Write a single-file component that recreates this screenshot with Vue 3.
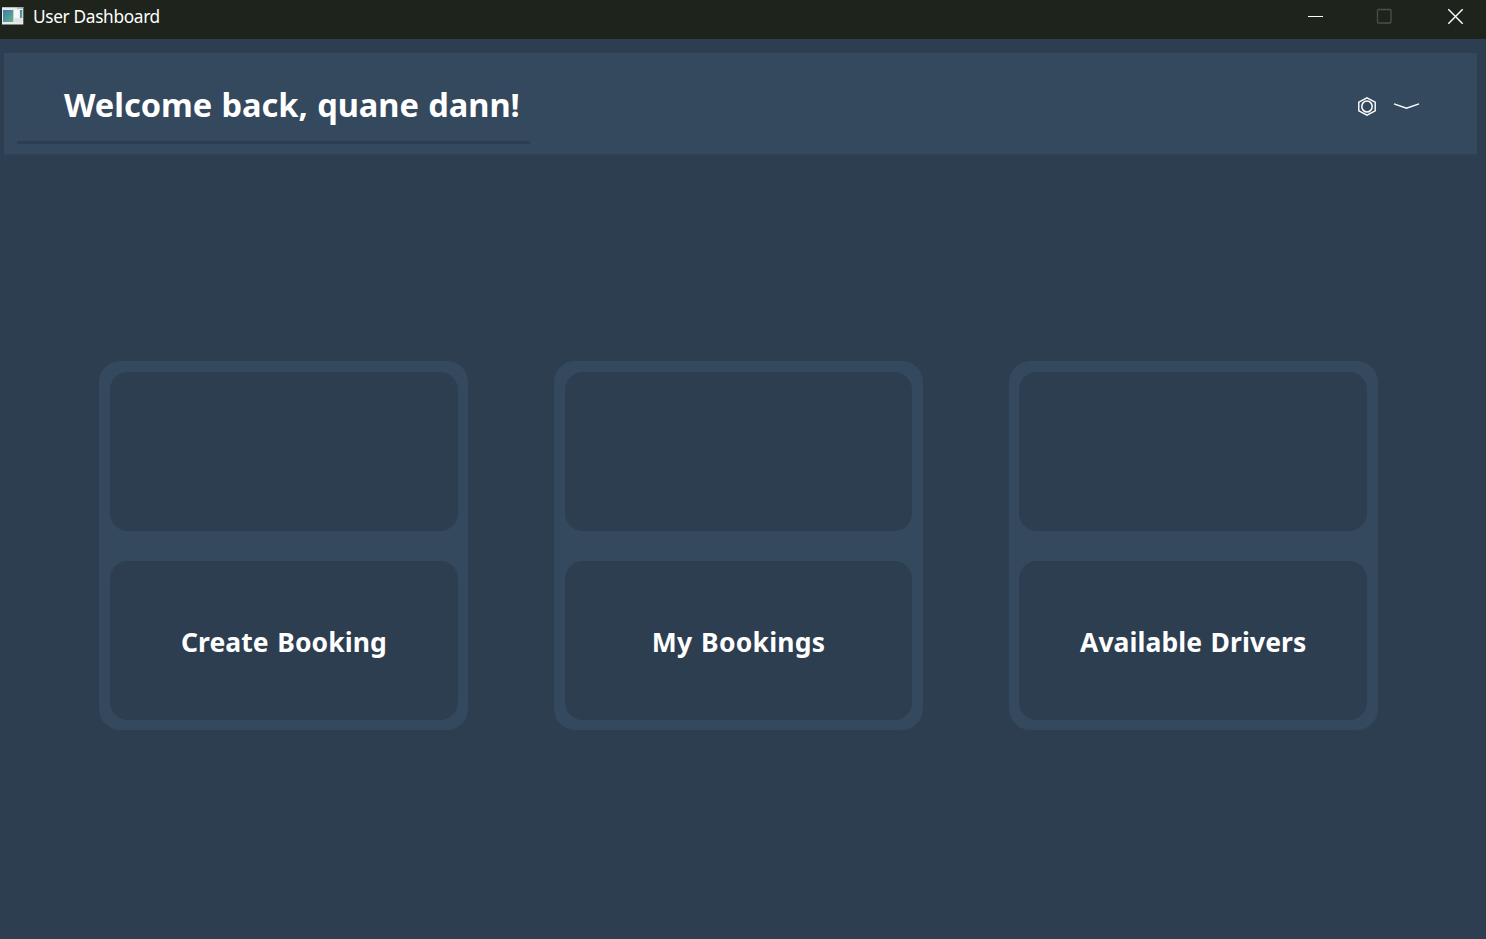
<script setup>
const cards = [
  { label: 'Create Booking', cls: 'create' },
  { label: 'My Bookings', cls: 'bookings' },
  { label: 'Available Drivers', cls: 'drivers' },
]
</script>

<template>
  <div class="window">
    <div class="titlebar">
      <svg class="app-icon" width="22" height="18" viewBox="0 0 22 18">
        <defs>
          <linearGradient id="pane" x1="0" y1="0" x2="1" y2="1">
            <stop offset="0" stop-color="#3f78ae" />
            <stop offset="1" stop-color="#63b788" />
          </linearGradient>
        </defs>
        <rect x="0" y="0" width="21.3" height="17.5" fill="#e9ebee" />
        <rect x="0" y="0" width="21.3" height="1" fill="#b8bec6" />
        <rect x="15" y="0.5" width="6" height="1" fill="#7d97b0" />
        <rect x="1" y="3" width="10.3" height="12" fill="url(#pane)" />
        <rect x="12" y="3" width="5" height="8" fill="#f7f7f8" />
        <rect x="18" y="3" width="2.3" height="8" fill="url(#pane)" />
        <rect x="12" y="11.5" width="8.3" height="4" fill="#dfe1e4" />
      </svg>
      <span class="title">User Dashboard</span>
      <svg class="controls" width="160" height="18" viewBox="0 0 160 18" fill="none">
        <path d="M2 8.5H17" stroke="#fff" />
        <rect x="71.5" y="1.5" width="13.5" height="13.5" rx="1" stroke="#4b504a" stroke-width="1.3" />
        <path d="M142.3 1.3L156.7 15.7M156.7 1.3L142.3 15.7" stroke="#fff" stroke-width="1.4" />
      </svg>
    </div>
    <header class="header">
      <div class="welcome"><h1>Welcome back, quane dann!</h1></div>
      <svg class="menu" width="64" height="22" viewBox="0 0 64 22" fill="none" stroke="#fff">
        <path d="M10 1.8L18.2 6.1V14.9L10 19.2L1.8 14.9V6.1Z" stroke-width="1.4" />
        <ellipse cx="10" cy="10.5" rx="5.2" ry="5.5" stroke-width="1.5" />
        <path d="M37 7.8L49.5 12.2L62 7.8" stroke-width="1.4" />
      </svg>
    </header>
    <main class="cards">
      <section v-for="card in cards" :key="card.label" class="card">
        <div class="tile"></div>
        <div class="tile"><span :class="card.cls">{{ card.label }}</span></div>
      </section>
    </main>
  </div>
</template>

<style>
body {
  margin: 0;
  background: #2c3e50;
}
</style>

<style scoped>
.window {
  height: 939px;
  display: flex;
  flex-direction: column;
  overflow: hidden;
  background: #2c3e50;
  color: #fff;
  font-family: "Noto Sans", "Open Sans", sans-serif;
}
.titlebar {
  height: 39px;
  flex: none;
  display: flex;
  align-items: flex-start;
  background: #1e231c;
}
.app-icon {
  margin: 7px 0 0 2px;
}
.title {
  margin: 4px 0 0 9px;
  font-size: 17.3px;
  line-height: 25px;
  white-space: nowrap;
  letter-spacing: -0.35px;
}
.controls {
  margin: 8px 20px 0 auto;
}
.header {
  flex: none;
  box-sizing: border-box;
  height: 101px;
  margin: 14px 9px 0 4px;
  padding: 0 56px 0 13px;
  display: flex;
  justify-content: space-between;
  align-items: flex-start;
  background: #34495e;
  box-shadow: 0 3px 0 #2e4053;
}
.welcome {
  box-sizing: border-box;
  width: 513px;
  height: 91px;
  padding: 29px 0 0 47px;
  border-bottom: 3px solid #2c3e50;
}
h1 {
  margin: 0;
  font-size: 32.6px;
  line-height: 46px;
  font-weight: 700;
  white-space: nowrap;
  letter-spacing: -0.04px;
  word-spacing: 1px;
}
.menu {
  margin-top: 43px;
}
.cards {
  display: flex;
  gap: 85.65px;
  padding: 207px 0 0 99.4px;
}
.card {
  box-sizing: border-box;
  width: 369px;
  height: 369px;
  padding: 11px 10.6px 10px;
  display: flex;
  flex-direction: column;
  gap: 30px;
  border-radius: 21px;
  background: #34495e;
}
.tile {
  flex: 1;
  display: flex;
  align-items: center;
  justify-content: center;
  border-radius: 18px;
  background: #2c3e50;
  font-size: 26.5px;
  line-height: 36px;
  font-weight: 700;
  white-space: nowrap;
}
.tile span {
  margin-top: 3px;
  letter-spacing: 0.06px;
  word-spacing: 1.6px;
}
.tile .bookings {
  letter-spacing: 0.25px;
}
</style>
